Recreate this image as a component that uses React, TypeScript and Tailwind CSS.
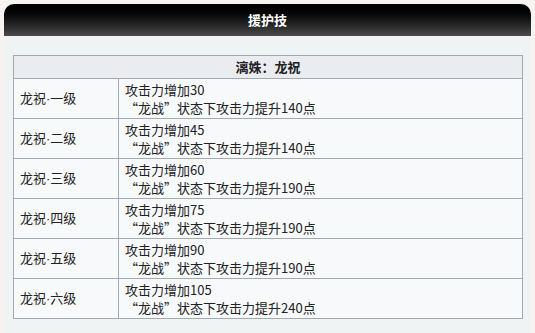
import React from "react";

const rows = [
  { lv: "一级", atk: "30", buff: "140" },
  { lv: "二级", atk: "45", buff: "140" },
  { lv: "三级", atk: "60", buff: "190" },
  { lv: "四级", atk: "75", buff: "190" },
  { lv: "五级", atk: "90", buff: "190" },
  { lv: "六级", atk: "105", buff: "240" },
];

const App: React.FC = () => {
  return (
    <div
      className="w-[535px] h-[333px] overflow-hidden bg-[#f6f3f1] pt-[4px] px-[4px] text-[13px] text-[#202122]"
      style={{ fontFamily: '"Noto Sans CJK SC", "Noto Sans", sans-serif' }}
    >
      <div className="w-[527px] h-full flex flex-col">
        {/* Title bar */}
        <div className="h-[32px] shrink-0 rounded-t-[10px] bg-gradient-to-b from-[#000000] to-[#4b4b4b] flex items-center justify-center">
          <span className="text-white font-bold text-[13px]">援护技</span>
        </div>

        {/* Content */}
        <div className="flex-1 bg-[#eff3f3] pt-[19px] pl-[9px] pr-[8px]">
          <table className="w-[510px] border-collapse border border-[#a2a9b1] bg-[#f8f9fa]">
            <thead>
              <tr>
                <th
                  colSpan={2}
                  className="h-[23px] p-0 bg-[#eaecf0] border border-[#a2a9b1] text-center font-bold leading-[18px]"
                >
                  漓姝：龙祝
                </th>
              </tr>
            </thead>
            <tbody>
              {rows.map((r) => (
                <tr key={r.lv}>
                  <td className="w-[105px] h-[40px] py-0 px-[6px] border border-[#a2a9b1] align-middle leading-[18px]">
                    龙祝<span className="font-['Liberation_Sans']">·</span>
                    {r.lv}
                  </td>
                  <td className="h-[40px] py-0 px-[6px] border border-[#a2a9b1] align-middle leading-[17.5px]">
                    <div>攻击力增加{r.atk}</div>
                    <div>“龙战”状态下攻击力提升{r.buff}点</div>
                  </td>
                </tr>
              ))}
            </tbody>
          </table>
        </div>
      </div>
    </div>
  );
};

export default App;
